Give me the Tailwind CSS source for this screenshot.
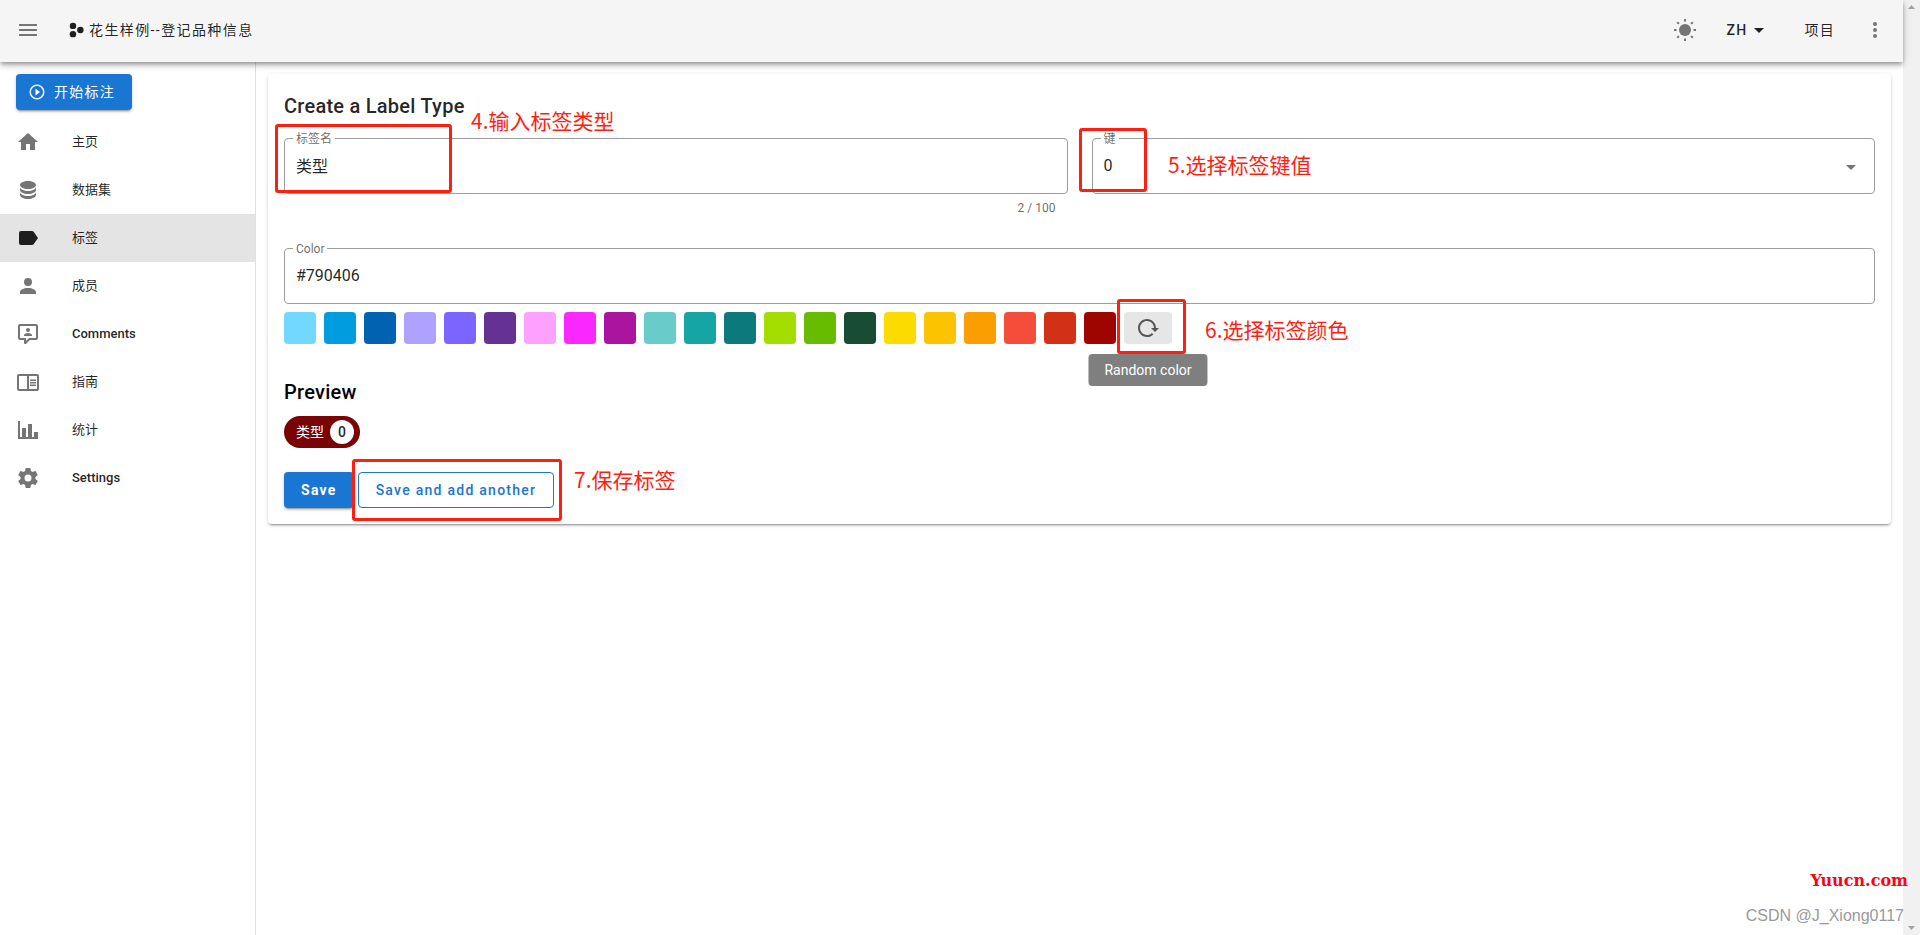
<!DOCTYPE html>
<html lang="zh">
<head>
<meta charset="utf-8">
<meta name="viewport" content="width=device-width, initial-scale=1">
<title>花生样例--登记品种信息</title>
<script src="https://cdn.jsdelivr.net/npm/@tailwindcss/browser@4"></script>
</head>
<body class="relative flex h-screen overflow-hidden bg-white font-['Roboto','Noto_Sans_CJK_SC',sans-serif] text-black/87">

<div class="flex min-w-0 flex-1 flex-col">
  <!-- App bar -->
  <header class="relative z-10 flex h-[62px] shrink-0 items-center bg-[#f5f5f5] px-4 pb-0.5 text-sm shadow-[0_2px_4px_-1px_rgba(0,0,0,0.3),0_4px_5px_rgba(0,0,0,0.16),0_1px_10px_rgba(0,0,0,0.12)]">
    <button type="button" aria-label="Menu" class="text-[#757575]">
      <svg class="size-6" viewBox="0 0 24 24" fill="currentColor"><path d="M3,6H21V8H3V6M3,11H21V13H3V11M3,16H21V18H3V16Z"/></svg>
    </button>
    <a href="#" class="ml-7 flex items-center gap-[3px] tracking-widest">
      <svg class="size-[18px]" viewBox="0 0 24 24" fill="currentColor"><circle cx="6.600" cy="6.500" r="4.300"/><circle cx="6.600" cy="17.500" r="4.300"/><circle cx="16.500" cy="12" r="4.300"/></svg>
      <span>花生样例--登记品种信息</span>
    </a>
    <div class="ml-auto flex items-center">
      <button type="button" aria-label="Toggle theme" class="text-[#757575]">
        <svg class="size-6" viewBox="0 0 24 24" fill="currentColor"><circle cx="12" cy="12" r="6"/><g stroke="currentColor" stroke-width="2"><path d="M12 1v2.500M12 20.500v2.500M1 12h2.500M20.500 12h2.500M4.200 4.200l1.700 1.700M18.100 18.100l1.700 1.700M4.200 19.800l1.700-1.700M18.100 5.900l1.700-1.700"/></g></svg>
      </button>
      <button type="button" class="ml-[30px] flex items-center font-medium tracking-[0.09em]">ZH
        <svg class="size-6" viewBox="0 0 24 24" fill="currentColor"><path d="M7,10L12,15L17,10H7Z"/></svg>
      </button>
      <a href="#" class="ml-[33px] tracking-[0.09em]">项目</a>
      <button type="button" aria-label="More" class="ml-7 text-[#757575]">
        <svg class="size-6" viewBox="0 0 24 24" fill="currentColor"><circle cx="12" cy="6" r="2"/><circle cx="12" cy="12" r="2"/><circle cx="12" cy="18" r="2"/></svg>
      </button>
    </div>
  </header>

  <div class="flex min-h-0 flex-1">
    <!-- Sidebar -->
    <nav class="w-64 shrink-0 border-r border-black/12 pt-3 text-[13px]">
      <button type="button" class="mb-2 ml-4 flex h-9 items-center gap-2 rounded bg-[#1976d2] pr-[17px] pl-4 text-sm tracking-[0.09em] text-white shadow-[0_3px_1px_-2px_rgba(0,0,0,0.2),0_2px_2px_rgba(0,0,0,0.14),0_1px_5px_rgba(0,0,0,0.12)]">
        <svg class="-ml-1 size-[18px]" viewBox="0 0 24 24" fill="currentColor"><path d="M12,20C7.590,20 4,16.410 4,12C4,7.590 7.590,4 12,4C16.410,4 20,7.590 20,12C20,16.410 16.410,20 12,20M12,2A10,10 0 0,0 2,12A10,10 0 0,0 12,22A10,10 0 0,0 22,12A10,10 0 0,0 12,2M10,16.500L16,12L10,7.500V16.500Z"/></svg>
        开始标注
      </button>
      <a href="#" class="flex h-12 items-center gap-8 px-4"><svg class="size-6 text-[#757575]" viewBox="0 0 24 24" fill="currentColor"><path d="M10,20V14H14V20H19V12H22L12,3L2,12H5V20H10Z"/></svg>主页</a>
      <a href="#" class="flex h-12 items-center gap-8 px-4"><svg class="size-6 text-[#757575]" viewBox="0 0 24 24" fill="currentColor"><path d="M12,3C7.580,3 4,4.790 4,7C4,9.210 7.580,11 12,11C16.420,11 20,9.210 20,7C20,4.790 16.420,3 12,3M4,9V12C4,14.210 7.580,16 12,16C16.420,16 20,14.210 20,12V9C20,11.210 16.420,13 12,13C7.580,13 4,11.210 4,9M4,14V17C4,19.210 7.580,21 12,21C16.420,21 20,19.210 20,17V14C20,16.210 16.420,18 12,18C7.580,18 4,16.210 4,14Z"/></svg>数据集</a>
      <a href="#" aria-current="page" class="flex h-12 items-center gap-8 bg-[#e4e4e4] px-4"><svg class="size-6" viewBox="0 0 24 24" fill="currentColor"><path d="M17.630,5.840C17.270,5.330 16.670,5 16,5H5A2,2 0 0,0 3,7V17A2,2 0 0,0 5,19H16C16.670,19 17.270,18.660 17.630,18.150L22,12L17.630,5.840Z"/></svg>标签</a>
      <a href="#" class="flex h-12 items-center gap-8 px-4"><svg class="size-6 text-[#757575]" viewBox="0 0 24 24" fill="currentColor"><path d="M12,4A4,4 0 0,1 16,8A4,4 0 0,1 12,12A4,4 0 0,1 8,8A4,4 0 0,1 12,4M12,14C16.420,14 20,15.790 20,18V20H4V18C4,15.790 7.580,14 12,14Z"/></svg>成员</a>
      <a href="#" class="flex h-12 items-center gap-8 px-4 font-medium"><svg class="size-6 text-[#757575]" viewBox="0 0 24 24" fill="currentColor"><path d="M9,22A1,1 0 0,1 8,21V18H4A2,2 0 0,1 2,16V4C2,2.890 2.900,2 4,2H20A2,2 0 0,1 22,4V16A2,2 0 0,1 20,18H13.900L10.200,21.710C10,21.900 9.750,22 9.500,22V22H9M10,16V19.080L13.080,16H20V4H4V16H10M16,14H8V13C8,11.670 10.670,11 12,11C13.330,11 16,11.670 16,13V14M12,6A2,2 0 0,1 14,8A2,2 0 0,1 12,10A2,2 0 0,1 10,8A2,2 0 0,1 12,6Z"/></svg>Comments</a>
      <a href="#" class="flex h-12 items-center gap-8 px-4"><svg class="size-6 text-[#757575]" viewBox="0 0 24 24" fill="currentColor"><path d="M21,4H3A2,2 0 0,0 1,6V19A2,2 0 0,0 3,21H21A2,2 0 0,0 23,19V6A2,2 0 0,0 21,4M3,19V6H11V19H3M21,19H13V6H21V19M14,9.500H20V11H14V9.500M14,12H20V13.500H14V12M14,14.500H20V16H14V14.500Z"/></svg>指南</a>
      <a href="#" class="flex h-12 items-center gap-8 px-4"><svg class="size-6 text-[#757575]" viewBox="0 0 24 24" fill="currentColor"><path d="M22,21H2V3H4V19H6V10H10V19H12V6H16V19H18V14H22V21Z"/></svg>统计</a>
      <a href="#" class="flex h-12 items-center gap-8 px-4 font-medium"><svg class="size-6 text-[#757575]" viewBox="0 0 24 24" fill="currentColor"><path d="M12,15.500A3.500,3.500 0 0,1 8.500,12A3.500,3.500 0 0,1 12,8.500A3.500,3.500 0 0,1 15.500,12A3.500,3.500 0 0,1 12,15.500M19.430,12.970C19.470,12.650 19.500,12.330 19.500,12C19.500,11.670 19.470,11.340 19.430,11L21.540,9.370C21.730,9.220 21.780,8.950 21.660,8.730L19.660,5.270C19.540,5.050 19.270,4.960 19.050,5.050L16.560,6.050C16.040,5.660 15.500,5.320 14.870,5.070L14.500,2.420C14.460,2.180 14.250,2 14,2H10C9.750,2 9.540,2.180 9.500,2.420L9.130,5.070C8.500,5.320 7.960,5.660 7.440,6.050L4.950,5.050C4.730,4.960 4.460,5.050 4.340,5.270L2.340,8.730C2.210,8.950 2.270,9.220 2.460,9.370L4.570,11C4.530,11.340 4.500,11.670 4.500,12C4.500,12.330 4.530,12.650 4.570,12.970L2.460,14.630C2.270,14.780 2.210,15.050 2.340,15.270L4.340,18.730C4.460,18.950 4.730,19.030 4.950,18.950L7.440,17.940C7.960,18.340 8.500,18.680 9.130,18.930L9.500,21.580C9.540,21.820 9.750,22 10,22H14C14.250,22 14.460,21.820 14.500,21.580L14.870,18.930C15.500,18.670 16.040,18.340 16.560,17.940L19.050,18.950C19.270,19.030 19.540,18.950 19.660,18.730L21.660,15.270C21.780,15.050 21.730,14.780 21.540,14.630L19.430,12.970Z"/></svg>Settings</a>
    </nav>

    <!-- Label form -->
    <main class="min-w-0 flex-1 p-3">
      <form class="rounded bg-white p-4 shadow-[0_3px_1px_-2px_rgba(0,0,0,0.2),0_2px_2px_rgba(0,0,0,0.14),0_1px_5px_rgba(0,0,0,0.12)]">
        <h1 class="text-xl leading-8 font-medium tracking-[0.0125em]">Create a Label Type</h1>
        <div class="mt-4 grid grid-cols-2 gap-6">
          <div>
            <div class="relative h-14 rounded border border-[#9e9e9e]">
              <label for="name" class="absolute -top-2 left-2 bg-white px-[3px] text-xs text-black/60">标签名</label>
              <input id="name" type="text" value="类型" class="h-full w-full px-[11px] pb-0.5 text-base outline-none">
            </div>
            <p class="mt-1.5 mr-3 text-right text-xs text-black/60">2 / 100</p>
          </div>
          <div>
            <div class="relative h-14 rounded border border-[#9e9e9e]">
              <label for="key" class="absolute -top-2 left-2 bg-white px-[3px] text-xs text-black/60">键</label>
              <select id="key" class="h-full w-full appearance-none px-[11px] text-base outline-none"><option>0</option></select>
              <svg class="pointer-events-none absolute top-4 right-[11px] size-6 text-[#757575]" viewBox="0 0 24 24" fill="currentColor"><path d="M7,10L12,15L17,10H7Z"/></svg>
            </div>
          </div>
        </div>
        <div class="relative mt-8 h-14 rounded border border-[#9e9e9e]">
          <label for="color" class="absolute -top-2 left-2 bg-white px-[3px] text-xs text-black/60">Color</label>
          <input id="color" type="text" value="#790406" class="h-full w-full px-[11px] pb-0.5 text-base outline-none">
        </div>
        <div class="mt-2 flex gap-2">
          <button type="button" aria-label="#73D8FF" class="size-8 rounded bg-[#73d8ff]"></button>
          <button type="button" aria-label="#009CE0" class="size-8 rounded bg-[#009ce0]"></button>
          <button type="button" aria-label="#0062B1" class="size-8 rounded bg-[#0062b1]"></button>
          <button type="button" aria-label="#AEA1FF" class="size-8 rounded bg-[#aea1ff]"></button>
          <button type="button" aria-label="#7B64FF" class="size-8 rounded bg-[#7b64ff]"></button>
          <button type="button" aria-label="#653294" class="size-8 rounded bg-[#653294]"></button>
          <button type="button" aria-label="#FDA1FF" class="size-8 rounded bg-[#fda1ff]"></button>
          <button type="button" aria-label="#FA28FF" class="size-8 rounded bg-[#fa28ff]"></button>
          <button type="button" aria-label="#AB149E" class="size-8 rounded bg-[#ab149e]"></button>
          <button type="button" aria-label="#68CCCA" class="size-8 rounded bg-[#68ccca]"></button>
          <button type="button" aria-label="#16A5A5" class="size-8 rounded bg-[#16a5a5]"></button>
          <button type="button" aria-label="#0C797D" class="size-8 rounded bg-[#0c797d]"></button>
          <button type="button" aria-label="#A4DD00" class="size-8 rounded bg-[#a4dd00]"></button>
          <button type="button" aria-label="#68BC00" class="size-8 rounded bg-[#68bc00]"></button>
          <button type="button" aria-label="#194D33" class="size-8 rounded bg-[#194d33]"></button>
          <button type="button" aria-label="#FCDC00" class="size-8 rounded bg-[#fcdc00]"></button>
          <button type="button" aria-label="#FCC400" class="size-8 rounded bg-[#fcc400]"></button>
          <button type="button" aria-label="#FB9E00" class="size-8 rounded bg-[#fb9e00]"></button>
          <button type="button" aria-label="#F44E3B" class="size-8 rounded bg-[#f44e3b]"></button>
          <button type="button" aria-label="#D33115" class="size-8 rounded bg-[#d33115]"></button>
          <button type="button" aria-label="#9F0500" class="size-8 rounded bg-[#9f0500]"></button>
          <div class="relative">
            <button type="button" aria-describedby="tip" aria-label="Random color" class="flex h-8 w-12 items-center justify-center rounded bg-[#e6e6e6] text-[#555]">
              <svg class="size-6" viewBox="0 0 24 24" fill="currentColor"><path d="M2 12C2 16.970 6.030 21 11 21C13.390 21 15.680 20.060 17.400 18.400L15.900 16.900C14.630 18.250 12.860 19 11 19C4.760 19 1.640 11.460 6.050 7.050C10.460 2.640 18 5.770 18 12H15L19 16H19.100L23 12H20C20 7.030 15.970 3 11 3C6.030 3 2 7.030 2 12Z"/></svg>
            </button>
            <div id="tip" role="tooltip" class="absolute top-[42px] left-1/2 -translate-x-1/2 rounded bg-[#7f7f7f] px-4 py-[5px] text-sm leading-[22px] whitespace-nowrap text-white">Random color</div>
          </div>
        </div>
        <h2 class="mt-8 text-xl leading-8 font-medium tracking-[0.0125em] text-black">Preview</h2>
        <div class="mt-2 flex">
          <span class="flex h-8 items-center gap-1.5 rounded-full bg-[#790406] pr-1.5 pl-3 text-sm text-white">类型
            <span class="flex size-6 items-center justify-center rounded-full bg-white font-medium text-black/87">0</span>
          </span>
        </div>
        <div class="mt-6 flex gap-1">
          <button type="submit" class="h-9 rounded bg-[#1976d2] px-[17px] text-sm font-bold tracking-[0.09em] text-white shadow-[0_3px_1px_-2px_rgba(0,0,0,0.2),0_2px_2px_rgba(0,0,0,0.14),0_1px_5px_rgba(0,0,0,0.12)]">Save</button>
          <button type="button" class="h-9 rounded border border-[#1976d2] px-[17px] text-sm font-medium tracking-[0.09em] text-[#1976d2]">Save and add another</button>
        </div>
      </form>
    </main>
  </div>
</div>

<!-- Window scrollbar -->
<div class="flex w-[17px] shrink-0 flex-col items-center justify-between bg-[#f1f1f1] py-[5px]">
  <svg class="h-1 w-[7px]" viewBox="0 0 7 4" fill="#a3a3a3"><path d="M0 4L3.500 0L7 4Z"/></svg>
  <svg class="h-1 w-[7px]" viewBox="0 0 7 4" fill="#a3a3a3"><path d="M0 0L3.500 4L7 0Z"/></svg>
</div>

<!-- Tutorial annotations -->
<div class="pointer-events-none absolute inset-0 z-20 font-['Noto_Sans_CJK_SC',sans-serif] text-[21px] leading-6 text-[#ff1e10]">
  <div class="absolute top-[124px] left-[275px] h-[69px] w-[177px] rounded-[3px] border-3 border-[#ff1e10]"></div>
  <p class="absolute top-[108px] left-[471px]">4.输入标签类型</p>
  <div class="absolute top-[128px] left-[1079px] h-[64px] w-[68px] rounded-[3px] border-3 border-[#ff1e10]"></div>
  <p class="absolute top-[152px] left-[1168px]">5.选择标签键值</p>
  <div class="absolute top-[299px] left-[1117px] h-[55px] w-[69px] rounded-[3px] border-3 border-[#ff1e10]"></div>
  <p class="absolute top-[317px] left-[1205px]">6.选择标签颜色</p>
  <div class="absolute top-[459px] left-[352px] h-[62px] w-[210px] rounded-[3px] border-3 border-[#ff1e10]"></div>
  <p class="absolute top-[467px] left-[574px]">7.保存标签</p>
</div>

<!-- Watermarks -->
<p class="absolute right-3 bottom-[42px] z-20 font-['DejaVu_Serif',serif] text-base font-bold text-[#ff0017]">Yuucn.com</p>
<p class="absolute right-4 bottom-[7px] z-20 font-['Liberation_Sans',sans-serif] text-base text-[#999]">CSDN @J_Xiong0117</p>
</body>
</html>
